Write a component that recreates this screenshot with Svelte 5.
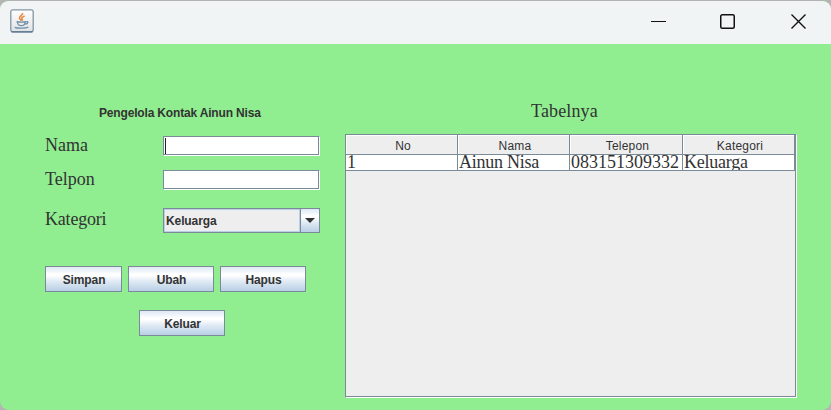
<script>
  let nama = $state('');
  let telpon = $state('');
  const columns = ['No', 'Nama', 'Telepon', 'Kategori'];
  const rows = [['1', 'Ainun Nisa', '083151309332', 'Keluarga']];
</script>

<div class="window">
  <header>
    <svg class="logo" width="24" height="24" viewBox="0 0 24 24">
      <defs>
        <linearGradient id="tile" x1="0" y1="0" x2="0" y2="1">
          <stop offset="0" stop-color="#fff" />
          <stop offset="1" stop-color="#dfe2e5" />
        </linearGradient>
      </defs>
      <rect x=".8" y=".8" width="22.4" height="22" rx="2" fill="url(#tile)" stroke="#8396a5" stroke-width="1.3" />
      <path d="M1.500 22.800h21" stroke="#56718a" stroke-width="1.200" />
      <path d="M12.600 4c.5 2.200-3.600 3.100-3.100 5.200.2 1 1.200 1.700 1.900 2.500M14.600 7c-2.700 1.200-3.400 2-2.500 3.200.5.700.2 1.200-.2 1.600" fill="none" stroke="#ea8a45" stroke-width="1.600" />
      <path d="M6.500 12.600c2.200.7 7.500.7 9.500 0M7.500 13c.2 3.200 1.300 3.700 3.800 3.700s3.700-.7 4-3.700M16.200 12.700c2.200-.7 2.500 1.700-.8 2.600M4.700 18.300c2.500 1.200 10.500 1.200 13.600-.2" fill="none" stroke="#6f8ea8" stroke-width="1.300" />
    </svg>
    <div class="controls">
      <svg width="16" height="16" viewBox="0 0 16 16"><path d="M0 8.500h15" stroke="#111" /></svg>
      <svg width="16" height="16" viewBox="0 0 16 16"><rect x=".75" y="1.750" width="13.500" height="13.500" rx="1.500" fill="none" stroke="#111" stroke-width="1.500" /></svg>
      <svg width="16" height="16" viewBox="0 0 16 16"><path d="M.5 1.500l14 14M14.500 1.500l-14 14" stroke="#111" stroke-width="1.400" /></svg>
    </div>
  </header>
  <main>
    <section class="form">
      <h1>Pengelola Kontak Ainun Nisa</h1>
      <div class="field">
        <label for="nama">Nama</label>
        <div class="box"><i class="caret"></i><input id="nama" bind:value={nama} /></div>
      </div>
      <div class="field second">
        <label for="telpon">Telpon</label>
        <div class="box"><input id="telpon" bind:value={telpon} /></div>
      </div>
      <div class="field third">
        <span class="label">Kategori</span>
        <div class="combo">
          <span>Keluarga</span>
          <div class="arrow"><svg width="10" height="5" viewBox="0 0 10 5"><path d="M0 0h10L5 5z" fill="#333" /></svg></div>
        </div>
      </div>
      <div class="buttons">
        <button class="narrow">Simpan</button>
        <button>Ubah</button>
        <button>Hapus</button>
      </div>
      <div class="exit"><button>Keluar</button></div>
    </section>
    <section class="list">
      <h2>Tabelnya</h2>
      <div class="scroll">
        <div class="pane">
          <div class="row head">
            {#each columns as c}<div>{c}</div>{/each}
          </div>
          {#each rows as r}
            <div class="row data">
              {#each r as v, i}<div class:number={i === 2}>{v}</div>{/each}
            </div>
          {/each}
        </div>
      </div>
    </section>
  </main>
</div>

<style>
  :global(body) { margin: 0; background: #b4b4b4; }
  * { box-sizing: border-box; }
  .window {
    width: 831px; height: 410px; overflow: hidden;
    background: #90ee90; border-top: 1px solid #b2b2b2;
    border-radius: 9px; color: #333;
    font-family: "Liberation Sans", Arial, sans-serif; font-size: 12px;
  }
  header {
    height: 43px; background: #f0f4f5; display: flex;
    justify-content: space-between; padding: 8px 24px 0 10px;
  }
  svg { display: block; }
  .controls { display: flex; gap: 55px; padding-top: 4px; }
  .controls svg:first-child { margin-right: -2px; }
  main { display: flex; gap: 25px; padding-left: 45px; }
  .form { width: 275px; padding-top: 62px; }
  h1 { margin: 0 0 0 54px; font-size: 12px; line-height: 14px; height: 30px; font-weight: bold; white-space: nowrap; letter-spacing: -.17px; }
  .field { display: flex; justify-content: space-between; height: 20px; }
  label, .label { font: 18px/18px "Liberation Serif", "Times New Roman", serif; }
  .label { letter-spacing: -.2px; }
  .second { margin-top: 14px; }
  .third { margin-top: 18px; height: 25px; }
  .third .label { line-height: 22px; }
  .box {
    width: 157px; height: 20px; background: #fff; display: flex;
    border: 1px solid #7a8a99; border-right-color: #fff; border-bottom-color: #fff;
    box-shadow: inset -1px -1px #7a8a99;
  }
  .box input { width: 100%; height: 17px; border: 0; background: none; outline: 0; padding: 0 2px; }
  .caret { width: 1px; height: 16px; margin: 1px 0 0 1px; background: #222; flex: none; }
  .combo {
    width: 157px; height: 25px; display: flex; border: 1px solid #7a8a99; background: #eee; font-weight: bold; letter-spacing: -.1px;
  }
  .combo span { flex: 1; border: 1px solid #b8cfe5; line-height: 22px; padding-left: 1px; }
  .arrow {
    width: 19px; border-left: 1px solid #7a8a99; display: flex; align-items: center; justify-content: center;
    background: linear-gradient(#dde8f3, #fff 30%, #fff 35%, #dde8f3 62%, #b8cfe5);
  }
  .buttons { display: flex; gap: 6px; margin-top: 33px; }
  .exit { margin: 18px 0 0 94px; display: flex; }
  button {
    width: 86px; height: 26px; padding: 1px 0 0 1px; border: 1px solid #7a8a99; border-radius: 0; color: #333;
    font: bold 12px/22px "Liberation Sans", Arial, sans-serif; letter-spacing: -.1px;
    background: linear-gradient(#dde8f3, #fff 30%, #fff 35%, #dde8f3 62%, #b8cfe5);
  }
  .narrow { width: 77px; }
  .list { width: 452px; padding-top: 57px; }
  h2 { margin: 0 0 0 186px; font: 18px/20px "Liberation Serif", "Times New Roman", serif; height: 33px; letter-spacing: .15px; }
  .scroll { border: 1px solid #7a8a99; border-right-color: #fff; border-bottom-color: #fff; height: 264px; }
  .pane { height: 262px; background: #eee; border-right: 1px solid #7a8a99; border-bottom: 1px solid #7a8a99; }
  .row { display: grid; grid-template-columns: 112px 112px 113px 112px; }
  .row > div { border-right: 1px solid #7a8a99; border-bottom: 1px solid #7a8a99; white-space: nowrap; }
  .head > div {
    height: 20px; text-align: center; line-height: 22px; letter-spacing: .2px; padding-left: 3px;
    box-shadow: inset 1px 1px #fff;
  }
  .data > div {
    height: 16px; overflow: hidden; background: #fff; padding-left: 1px;
    font: 18px/14px "Liberation Serif", "Times New Roman", serif; letter-spacing: -.25px;
  }
  .data > .number { letter-spacing: 0; }
</style>
